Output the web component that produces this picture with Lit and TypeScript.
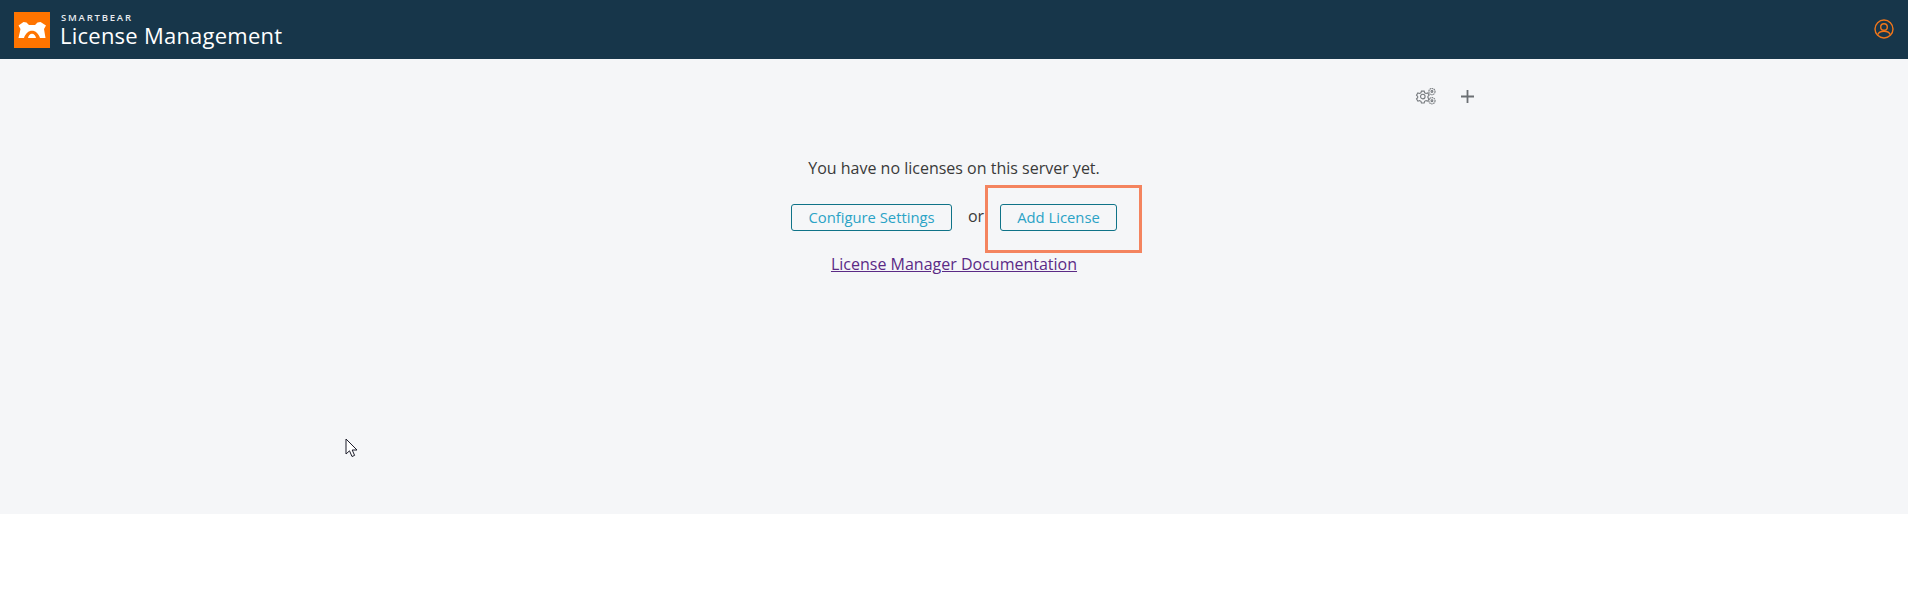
import { LitElement, html, css } from "lit";
import { customElement } from "lit/decorators.js";

@customElement("app-root")
export class AppRoot extends LitElement {
  static styles = css`
    :host { display: block; font-family: "Open Sans", "Noto Sans", sans-serif; background: #fff; min-height: 600px; }
    .header { height: 59px; background: #17364a; display: flex; align-items: center; padding: 0 14px 2px 14px; box-sizing: border-box; }
    .logo { width: 36px; height: 36px; flex: none; display: block; margin-top: 2px; }
    .brand { margin-left: 10px; display: flex; flex-direction: column; color: #fff; padding-top: 3px; }
    .smartbear { font-size: 9.5px; line-height: 10px; letter-spacing: 1.8px; font-weight: 600; color: #e8ecef; margin-left: 1px; }
    .title { font-size: 22px; line-height: 25px; letter-spacing: 0.24px; font-weight: 400; }
    .spacer { flex: 1; }
    .user { width: 20px; height: 20px; display: block; margin-top: 1px; }
    .main { height: 455px; background: #f5f6f8; position: relative; box-sizing: border-box; padding-top: 24px; display: flex; flex-direction: column; align-items: center; }
    .tools { width: 1050px; height: 26px; display: flex; justify-content: flex-end; align-items: center; gap: 20px; padding-right: 4px; box-sizing: border-box; }
    .gear { width: 22px; height: 18.3px; display: block; margin-right: 3px; }
    .plus { width: 15px; height: 15px; display: block; }
    .msg { margin-top: 48px; font-size: 16px; line-height: 22px; color: #3a3a3a; }
    .actions { margin-top: 25px; display: flex; align-items: center; position: relative; }
    button { font: inherit; font-size: 14.8px; line-height: 25px; height: 27px; box-sizing: border-box; padding: 0; background: transparent; border: 1px solid #0f7388; border-radius: 3px; color: #2ba3c6; text-align: center; }
    .cfg { width: 161px; }
    .add { width: 117px; }
    .or { width: 48px; text-align: center; font-size: 16px; line-height: 22px; color: #3a3a3a; margin-top: -3px; }
    .highlight { position: absolute; left: 194px; top: -19px; width: 157px; height: 68px; box-sizing: border-box; border: 3px solid #f4845f; pointer-events: none; }
    .doc { margin-top: 22px; font-size: 16px; line-height: 22px; color: #5b2a86; text-decoration: underline; }
    .cursor { position: absolute; left: 345px; top: 379px; width: 14px; height: 21px; display: block; }
  `;

  render() {
    return html`
      <header class="header">
        <svg class="logo" viewBox="0 0 36 36">
          <rect width="36" height="36" fill="#ff7400"></rect>
          <path fill="#fff" fill-rule="evenodd" d="M4.5 13.5 L9.5 10 L12.5 10.5 L15 13 H21 L23.5 10.5 L26.5 10 L32 13.5 L30 17 L31.5 26 H26 C24.5 21.5 21.5 18.8 18 18.8 C14.5 18.8 11.5 21.5 10 26 H4.5 L6.5 17 Z M14 26 C14.5 23.5 16 21.8 18 21.8 C20 21.8 21.5 23.5 22 26 Z"></path>
        </svg>
        <div class="brand">
          <span class="smartbear">SMARTBEAR</span>
          <span class="title">License Management</span>
        </div>
        <div class="spacer"></div>
        <svg class="user" viewBox="0 0 20 20" fill="none" stroke="#f0761a" stroke-width="1.4">
          <circle cx="10" cy="10" r="9"></circle>
          <circle cx="10" cy="8" r="3.3"></circle>
          <path d="M4 15.5 C4.5 13 7 12.2 10 12.2 C13 12.2 15.5 13 16 15.5"></path>
        </svg>
      </header>
      <main class="main">
        <div class="tools">
          <svg class="gear" viewBox="0 0 24 20" fill="none" stroke="#777b7f" stroke-width="1.2">
            <circle cx="8.5" cy="10.5" r="2.5"></circle>
            <path d="M7 4.5 h3 l.5 1.8 1.6 .8 1.8 -.6 1.5 2.5 -1.3 1.3 v1.4 l1.3 1.3 -1.5 2.5 -1.8 -.6 -1.6 .8 -.5 1.8 h-3 l-.5 -1.8 -1.6 -.8 -1.8 .6 -1.5 -2.5 1.3 -1.3 v-1.4 l-1.3 -1.3 1.5 -2.5 1.8 .6 1.6 -.8 z"></path>
            <circle cx="18.5" cy="5" r="3.4" stroke-dasharray="1.6 .6"></circle>
            <circle cx="18.5" cy="5" r="1"></circle>
            <circle cx="18.5" cy="15" r="3.4" stroke-dasharray="1.6 .6"></circle>
            <circle cx="18.5" cy="15" r="1"></circle>
          </svg>
          <svg class="plus" viewBox="0 0 15 15" stroke="#6b6f73" stroke-width="1.8"><path d="M7.5 1 V14 M1 7.5 H14"></path></svg>
        </div>
        <div class="msg">You have no licenses on this server yet.</div>
        <div class="actions">
          <button class="cfg">Configure Settings</button>
          <span class="or">or</span>
          <button class="add">Add License</button>
          <div class="highlight"></div>
        </div>
        <a class="doc" href="#">License Manager Documentation</a>
        <svg class="cursor" viewBox="0 0 14 21">
          <path d="M1 1 V16 L4.5 12.8 L7 18.5 L9.6 17.4 L7.2 12 H12 Z" fill="#fff" stroke="#1c1c2a" stroke-width="1"></path>
        </svg>
      </main>
    `;
  }
}
